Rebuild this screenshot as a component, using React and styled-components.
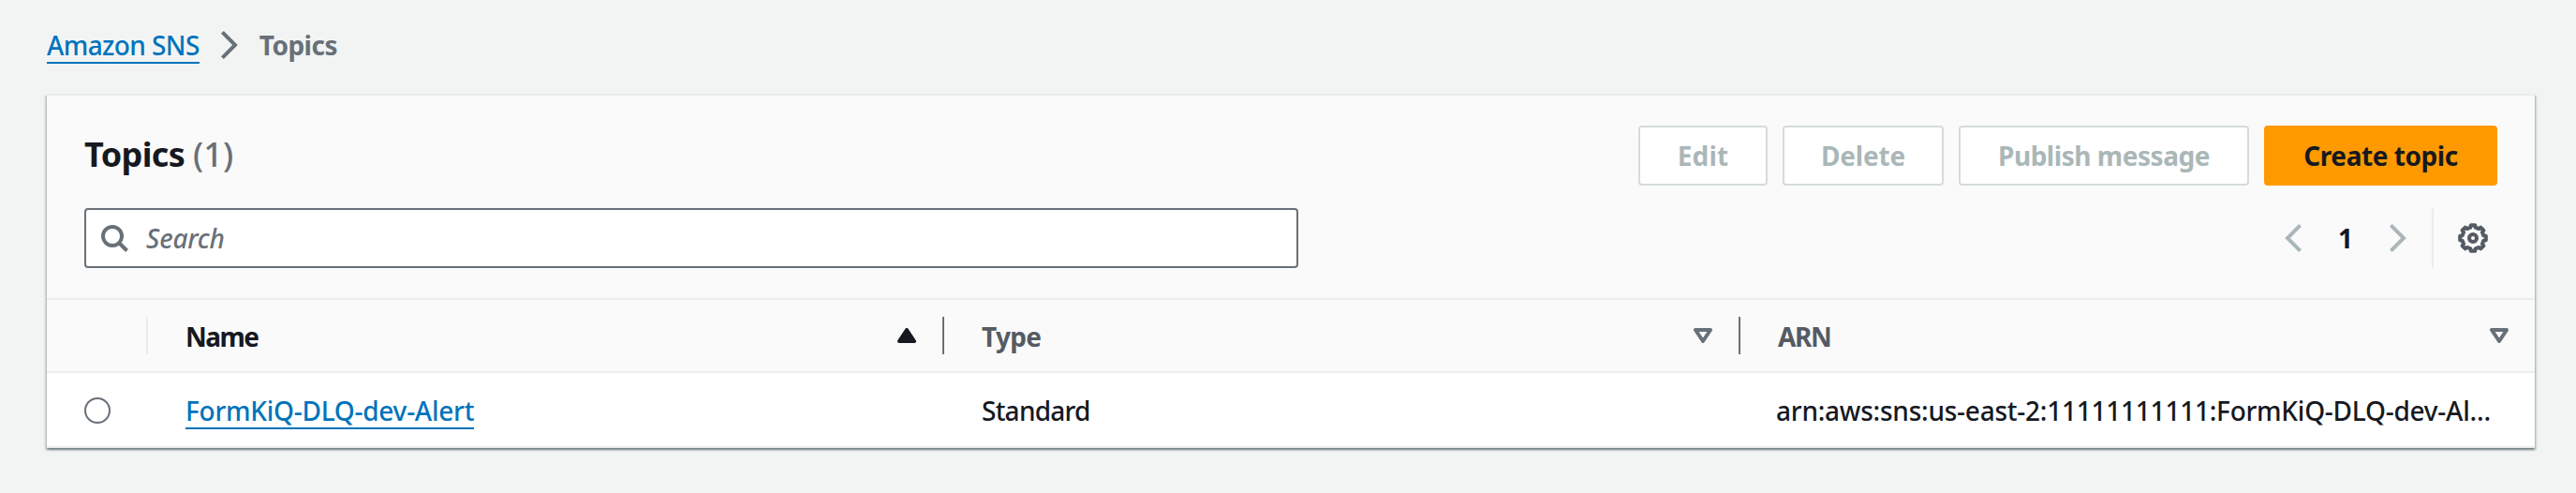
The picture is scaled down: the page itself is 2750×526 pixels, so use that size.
import React from "react";
import styled, { createGlobalStyle } from "styled-components";

const GlobalStyle = createGlobalStyle`
  *, *::before, *::after { box-sizing: border-box; }
  body {
    margin: 0;
    background: #f2f4f4;
    color: #16191f;
    font: 500 28px/44px "Noto Sans", sans-serif;
  }
`;

const Page = styled.main`
  min-height: 526px;
  padding: 26px 44px 0 50px;
`;

const Breadcrumbs = styled.nav`
  display: flex;
  align-items: center;
  height: 44px;
  color: #687078;
`;

const Link = styled.a`
  height: 40px;
  line-height: 40px;
  border-bottom: 2px solid #0073bb;
  color: #0073bb;
  letter-spacing: ${(p) => p.$track || 0}px;
  text-decoration: none;
  white-space: nowrap;
`;

const Crumb = styled.span`
  font-weight: 700;
  letter-spacing: -0.5px;
`;

const CrumbChevron = styled.span`
  display: flex;
  margin: 0 17px 0 15px;
`;

const Icon = styled.svg`
  display: block;
  flex: none;
  width: ${(p) => p.$w || 32}px;
  height: ${(p) => p.$h || 32}px;
  fill: none;
  stroke: currentColor;
  stroke-width: 4;
`;

const Panel = styled.section`
  margin-top: 30px;
  border-top: 2px solid #eaeded;
  background: #fff;
  box-shadow: 0 2px 2px 0 rgba(0, 28, 36, 0.36), 2px 2px 2px 0 rgba(0, 28, 36, 0.15),
    -2px 2px 2px 0 rgba(0, 28, 36, 0.15);
`;

const PanelHeader = styled.header`
  height: 218px;
  padding: 32px 40px 0;
  background: #fafafa;
  border-bottom: 2px solid #eaeded;
`;

const HeaderRow = styled.div`
  display: flex;
  justify-content: space-between;
  height: 64px;
  & + & { margin-top: 24px; }
`;

const Title = styled.h2`
  margin: 9px 0 0;
  font-size: 36px;
  font-weight: 700;
  line-height: 44px;
  letter-spacing: -0.6px;
`;

const Count = styled.span`
  color: #687078;
  font-weight: 500;
  letter-spacing: 0;
`;

const Actions = styled.div`
  display: flex;
  gap: 16px;
`;

const Button = styled.button`
  width: ${(p) => p.$width}px;
  height: 64px;
  padding: 0;
  border: 2px solid ${(p) => (p.$primary ? "#ff9900" : "#d5dbdb")};
  border-radius: 4px;
  background: ${(p) => (p.$primary ? "#ff9900" : "#fff")};
  color: ${(p) => (p.$primary ? "#16191f" : "#aab7b8")};
  font: 700 28px/40px "Noto Sans", sans-serif;
  letter-spacing: ${(p) => p.$track || 0}px;
`;

const SearchBox = styled.div`
  display: flex;
  align-items: center;
  gap: 16px;
  width: 1296px;
  height: 64px;
  padding-left: 16px;
  border: 2px solid #687078;
  border-radius: 4px;
  background: #fff;
  color: #687078;
  font-style: italic;
  letter-spacing: -0.2px;
`;

const Pager = styled.div`
  display: flex;
  align-items: center;
  padding-right: 10px;
  color: #aab7b8;
`;

const PageNumber = styled.span`
  width: 78px;
  color: #16191f;
  font-weight: 700;
  text-align: center;
`;

const Settings = styled.div`
  display: flex;
  align-items: center;
  height: 64px;
  margin-left: 21px;
  padding-left: 26px;
  border-left: 2px solid #eaeded;
  color: #545b64;
`;

const Row = styled.div`
  display: grid;
  grid-template-columns: 108px 850px 850px 848px;
  align-items: center;
  height: ${(p) => (p.$head ? 78 : 80)}px;
  border-bottom: 2px solid #eaeded;
  background: ${(p) => (p.$head ? "#fafafa" : "#fff")};
`;

const HeadCell = styled.div`
  display: flex;
  align-items: center;
  justify-content: space-between;
  height: 40px;
  padding: 0 28px 0 40px;
  border-right: ${(p) => (p.$divider ? `2px solid ${p.$divider}` : "0")};
  color: ${(p) => (p.$active ? "#16191f" : "#545b64")};
  font-weight: 700;
  letter-spacing: ${(p) => p.$track || 0}px;
`;

const HeadLabel = styled.span`
  padding-top: 1px;
`;

const Cell = styled.div`
  display: flex;
  align-items: center;
  padding: 2px 0 0 ${(p) => p.$indent || 40}px;
  letter-spacing: ${(p) => p.$track || 0}px;
  white-space: nowrap;
`;

const Radio = styled.span`
  width: 28px;
  height: 28px;
  border: 2px solid #687078;
  border-radius: 50%;
  background: #fff;
`;

const Chevron = ({ left }) => (
  <Icon viewBox="0 0 32 32">
    <path d={left ? "M22.6 2.4 9 16 22.6 29.6" : "M9.4 2.4 23 16 9.4 29.6"} />
  </Icon>
);

const SortArrow = ({ up }) => (
  <Icon viewBox="0 0 20 16" $w={20} $h={16} strokeLinejoin="round">
    {up ? (
      <path d="M10 2 18 14H2Z" fill="currentColor" />
    ) : (
      <path d="M2 2H18L10 14Z" stroke="#687078" />
    )}
  </Icon>
);

const gearPath = (() => {
  const points = [];
  for (let tooth = 0; tooth < 8; tooth += 1) {
    [[-13, 11.7], [-9, 14], [9, 14], [13, 11.7]].forEach(([offset, radius]) => {
      const angle = ((tooth * 45 + offset) * Math.PI) / 180;
      points.push(`${(16 + radius * Math.sin(angle)).toFixed(2)} ${(16 - radius * Math.cos(angle)).toFixed(2)}`);
    });
  }
  return `M${points.join("L")}Z`;
})();

const Gear = () => (
  <Icon viewBox="0 0 32 32">
    <path d={gearPath} strokeLinejoin="round" />
    <circle cx="16" cy="16" r="4" />
  </Icon>
);

export default function App() {
  return (
    <Page>
      <GlobalStyle />
      <Breadcrumbs>
        <Link $track={-0.6}>Amazon SNS</Link>
        <CrumbChevron>
          <Chevron />
        </CrumbChevron>
        <Crumb>Topics</Crumb>
      </Breadcrumbs>
      <Panel>
        <PanelHeader>
          <HeaderRow>
            <Title>
              Topics <Count>(1)</Count>
            </Title>
            <Actions>
              <Button $width={138} $track={0.2}>
                Edit
              </Button>
              <Button $width={172} $track={-0.15}>
                Delete
              </Button>
              <Button $width={310} $track={-0.45}>
                Publish message
              </Button>
              <Button $width={249} $track={-0.45} $primary>
                Create topic
              </Button>
            </Actions>
          </HeaderRow>
          <HeaderRow>
            <SearchBox>
              <Icon viewBox="0 0 32 32">
                <circle cx="12" cy="14" r="10" />
                <path d="M19 21 27.5 29.5" />
              </Icon>
              Search
            </SearchBox>
            <Pager>
              <Chevron left />
              <PageNumber>1</PageNumber>
              <Chevron />
              <Settings>
                <Gear />
              </Settings>
            </Pager>
          </HeaderRow>
        </PanelHeader>
        <Row $head>
          <HeadCell $divider="#eaeded" />
          <HeadCell $divider="#687078" $active $track={-1.5}>
            <HeadLabel>Name</HeadLabel>
            <SortArrow up />
          </HeadCell>
          <HeadCell $divider="#687078" $track={-0.7}>
            <HeadLabel>Type</HeadLabel>
            <SortArrow />
          </HeadCell>
          <HeadCell $track={-1.4}>
            <HeadLabel>ARN</HeadLabel>
            <SortArrow />
          </HeadCell>
        </Row>
        <Row>
          <Cell>
            <Radio />
          </Cell>
          <Cell>
            <Link $track={-0.25}>FormKiQ-DLQ-dev-Alert</Link>
          </Cell>
          <Cell $track={-0.75}>Standard</Cell>
          <Cell $indent={38} $track={-0.24}>
            arn:aws:sns:us-east-2:11111111111:FormKiQ-DLQ-dev-Al…
          </Cell>
        </Row>
      </Panel>
    </Page>
  );
}
